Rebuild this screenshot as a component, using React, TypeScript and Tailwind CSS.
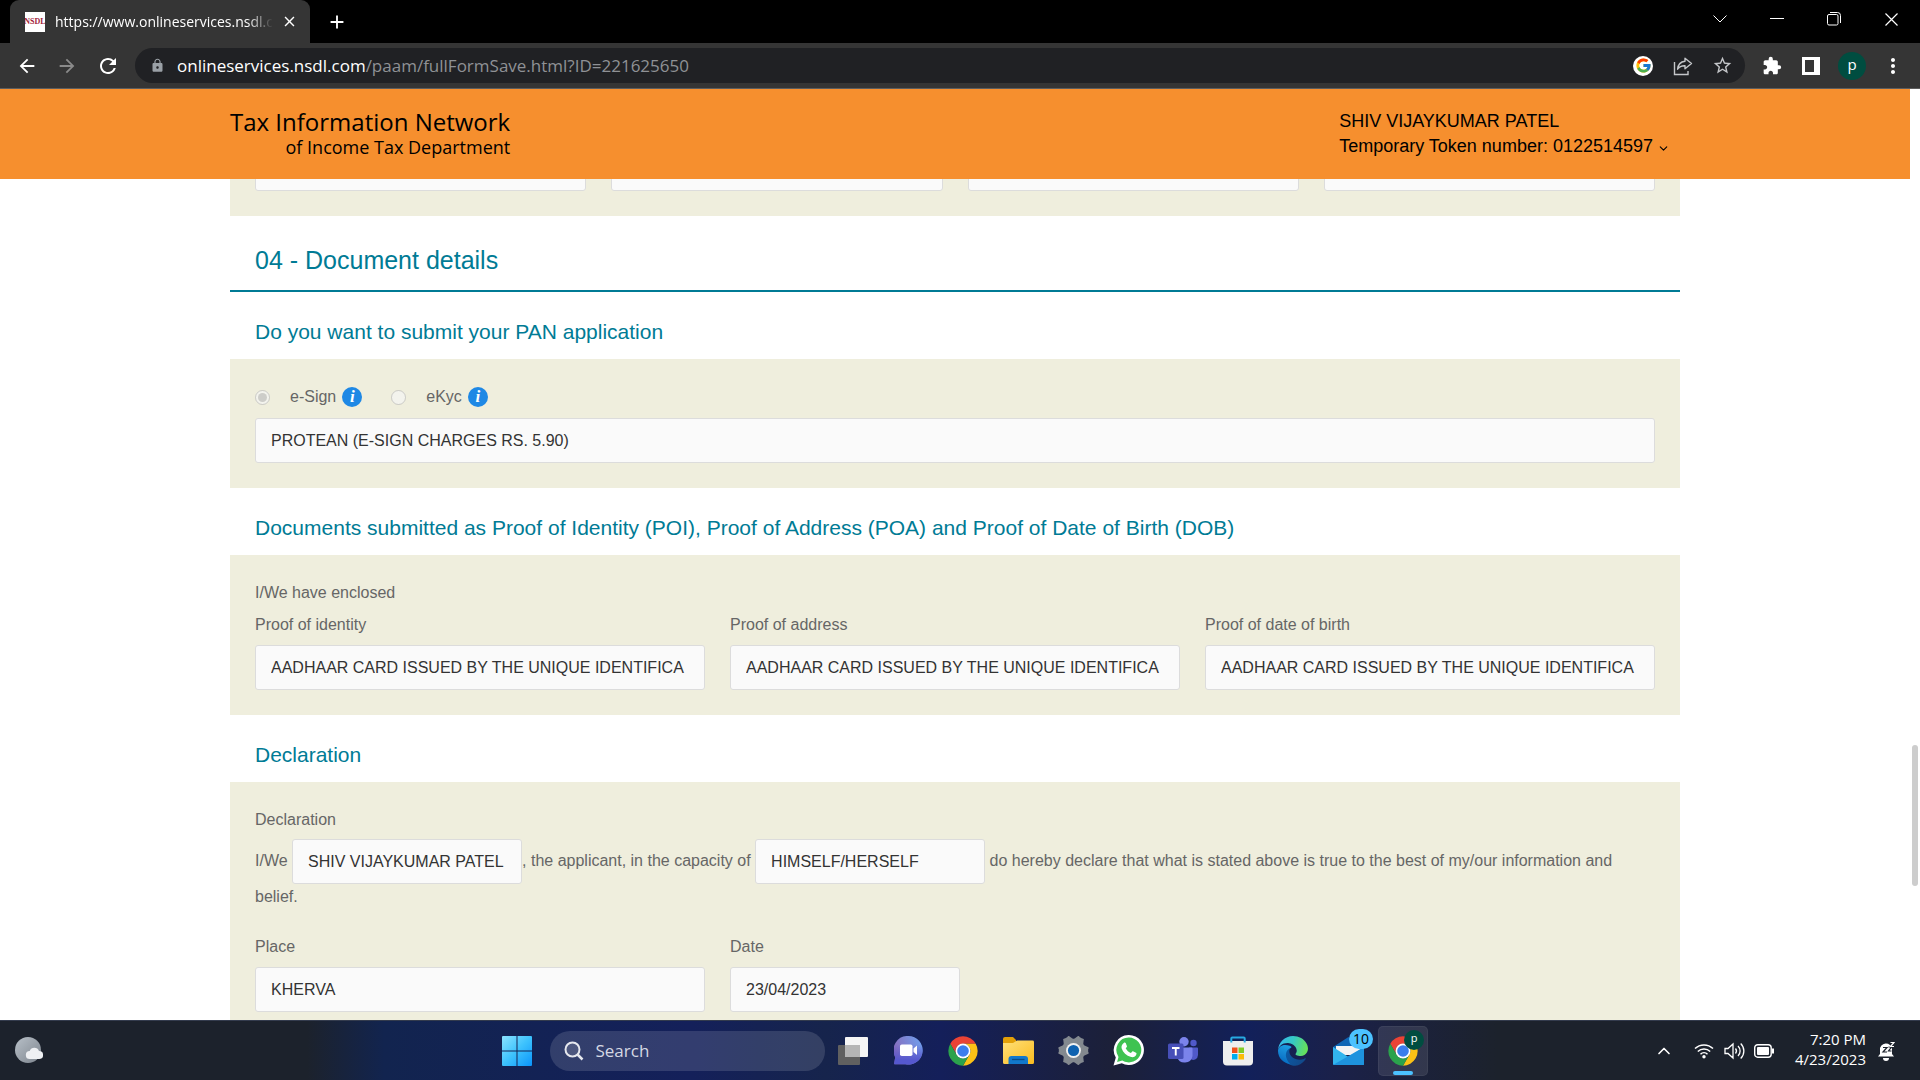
import React from "react";
import {
  MdArrowBack,
  MdArrowForward,
  MdRefresh,
  MdLock,
  MdStarBorder,
  MdExtension,
  MdClose,
  MdAdd,
  MdMoreVert,
} from "react-icons/md";
import { FcGoogle } from "react-icons/fc";
import { ChevronDown, ChevronUp } from "lucide-react";

const UI = "font-['Open_Sans','Noto_Sans',sans-serif]";
const ARIAL = "font-['Liberation_Sans',Arial,sans-serif]";

/* ---------- Browser chrome ---------- */

function TabStrip() {
  return (
    <div className="flex h-[43px] shrink-0 items-stretch justify-between bg-black pl-[10px] text-white">
      <div className="flex items-center">
        <div className="flex h-full w-[300px] items-center rounded-t-[9px] bg-[#353535] pl-[15px] pr-[12px]">
          <span className="flex h-5 w-5 items-center justify-center overflow-hidden bg-white font-['Liberation_Serif',serif] text-[8px] font-bold text-[#a3243b]">
            NSDL
          </span>
          <span className="ml-[10px] whitespace-nowrap text-[14px] [mask-image:linear-gradient(to_right,black_88%,transparent)]">
            https://www.onlineservices.nsdl.c
          </span>
          <button aria-label="Close tab" className="ml-auto">
            <MdClose size={17} />
          </button>
        </div>
        <button aria-label="New tab" className="ml-4">
          <MdAdd size={22} />
        </button>
      </div>
      <div className="flex h-[38px] items-center text-white">
        <button aria-label="Search tabs" className="flex w-[57px] justify-center">
          <svg width="14" height="8" viewBox="0 0 14 8" fill="none" stroke="currentColor">
            <path d="M.5.5 7 7 13.5.5" />
          </svg>
        </button>
        <button aria-label="Minimize" className="flex w-[57px] justify-center">
          <svg width="14" height="2" viewBox="0 0 14 2">
            <path d="M0 .5h14" stroke="currentColor" />
          </svg>
        </button>
        <button aria-label="Restore" className="flex w-[57px] justify-center">
          <svg width="14" height="14" viewBox="0 0 14 14" fill="none" stroke="currentColor">
            <rect x=".5" y="2.5" width="10.5" height="10.5" rx="1.5" />
            <path d="M3 .5h7.5a3 3 0 0 1 3 3V11" />
          </svg>
        </button>
        <button aria-label="Close window" className="flex w-[58px] justify-center">
          <svg width="13" height="13" viewBox="0 0 13 13" stroke="currentColor" strokeWidth="1.200">
            <path d="m.5.5 12 12M12.500.5l-12 12" />
          </svg>
        </button>
      </div>
    </div>
  );
}

function Toolbar() {
  return (
    <div className="flex h-[46px] shrink-0 items-center border-b border-[#5d5d5d] bg-[#353535] text-white">
      <button aria-label="Back" className="ml-4">
        <MdArrowBack size={22} />
      </button>
      <button aria-label="Forward" className="ml-[18px] text-[#8a8a8a]">
        <MdArrowForward size={22} />
      </button>
      <button aria-label="Reload" className="ml-[18px]">
        <MdRefresh size={24} />
      </button>
      <div className="ml-[15px] flex h-[35px] min-w-0 flex-1 items-center rounded-full bg-[#202124] pl-[15px] pr-3">
        <MdLock size={15} className="text-[#9aa0a6]" />
        <p className="ml-3 flex-1 whitespace-nowrap text-[17px] text-[#8f9195]">
          <span className="text-white">onlineservices.nsdl.com</span>/paam/fullFormSave.html?ID=221625650
        </p>
        <button aria-label="Google Lens" className="flex h-5 w-5 items-center justify-center rounded-full bg-white">
          <FcGoogle size={17} />
        </button>
        <button aria-label="Share" className="ml-5 text-[#c4c6c9]">
          <svg width="20" height="20" viewBox="0 0 20 20" fill="none" stroke="currentColor" strokeWidth="1.4">
            <path d="M1.500 6v12.500H15V15" />
            <path d="M12 2.200 18.500 7.500 12 12.800V9.800C8.500 9.600 6.300 10.800 4.600 13.200 5 9 7.500 5.800 12 5.300Z" strokeLinejoin="round" />
          </svg>
        </button>
        <button aria-label="Bookmark" className="ml-[19px] text-[#c4c6c9]">
          <MdStarBorder size={21} />
        </button>
      </div>
      <button aria-label="Extensions" className="ml-[17px]">
        <MdExtension size={20} />
      </button>
      <button aria-label="Side panel" className="ml-5">
        <svg width="18" height="18" viewBox="0 0 18 18">
          <rect width="18" height="18" fill="#fff" />
          <rect x="3" y="3" width="9" height="12" fill="#353535" />
        </svg>
      </button>
      <button aria-label="Profile" className="ml-[18px] flex h-7 w-7 items-center justify-center rounded-full bg-[#004d40] pb-[3px] text-[15px]">
        p
      </button>
      <button aria-label="Menu" className="ml-[15px] mr-[15px]">
        <MdMoreVert size={24} />
      </button>
    </div>
  );
}

/* ---------- Page ---------- */

function SiteHeader() {
  return (
    <header className="h-[90px] shrink-0 bg-[#f68f2e]">
      <div className="mx-auto flex h-full max-w-[1450px] items-center justify-between text-black">
        <div className={`${UI} text-right`}>
          <div className="text-[24px] font-medium leading-[26px]">Tax Information Network</div>
          <div className="text-[18px] font-medium leading-[24px]">of Income Tax Department</div>
        </div>
        <div className="mr-[10px] text-[18px] leading-[25px]">
          <div>SHIV VIJAYKUMAR PATEL</div>
          <button className="flex items-center">
            Temporary Token number: 0122514597
            <ChevronDown size={13} className="ml-1 mt-1" />
          </button>
        </div>
      </div>
    </header>
  );
}

const INPUT =
  "h-[45px] rounded-[3px] border border-[#dcdcdc] bg-[#fafafa] px-[15px] text-[16px] text-[#333]";

function Field({ id, label, value }: { id: string; label: string; value: string }) {
  return (
    <div className="flex flex-col">
      <label htmlFor={id} className="mb-2 leading-6">
        {label}
      </label>
      <input id={id} readOnly defaultValue={value} className={`${INPUT} w-full`} />
    </div>
  );
}

function SubHeading({ children }: { children: React.ReactNode }) {
  return (
    <h3 className="px-[25px] pb-[13px] pt-[26px] text-[21px] leading-7 text-[#007b95]">{children}</h3>
  );
}

function Panel({ children }: { children: React.ReactNode }) {
  return <div className="bg-[#efeedd] px-[25px] py-[25px]">{children}</div>;
}

function InfoIcon() {
  return (
    <span className="flex h-5 w-5 items-center justify-center rounded-full bg-[#1e88e5] font-['Liberation_Serif',serif] text-[17px] font-bold italic leading-5 text-white">
      i
    </span>
  );
}

function Choice({ id, label, checked }: { id: string; label: string; checked?: boolean }) {
  return (
    <div className="flex h-[26px] items-center">
      <input
        id={id}
        type="radio"
        name="submission"
        disabled
        defaultChecked={checked}
        className="h-[15px] w-[15px]"
      />
      <label htmlFor={id} className="ml-5 mr-[6px]">
        {label}
      </label>
      <InfoIcon />
    </div>
  );
}

const AADHAAR = "AADHAAR CARD ISSUED BY THE UNIQUE IDENTIFICA";

function FormPage() {
  return (
    <main className="min-h-0 flex-1 overflow-hidden bg-white">
      <div className="mx-auto max-w-[1450px] text-[16px] text-[#666]">
        <div className="-mt-[33px] grid grid-cols-4 gap-[25px] bg-[#efeedd] px-[25px] pb-[25px]">
          <input aria-label="Flat" readOnly className={`${INPUT} min-w-0`} />
          <input aria-label="Area" readOnly className={`${INPUT} min-w-0`} />
          <input aria-label="Town" readOnly className={`${INPUT} min-w-0`} />
          <input aria-label="Pincode" readOnly className={`${INPUT} min-w-0`} />
        </div>

        <h2 className="border-b-2 border-[#007b95] px-[25px] pb-[13px] pt-[27px] text-[25px] leading-[34px] text-[#007b95]">
          04 - Document details
        </h2>

        <SubHeading>Do you want to submit your PAN application</SubHeading>
        <Panel>
          <div className="mb-2 flex gap-[29px]">
            <Choice id="esign" label="e-Sign" checked />
            <Choice id="ekyc" label="eKyc" />
          </div>
          <input
            aria-label="e-Sign provider"
            readOnly
            defaultValue="PROTEAN (E-SIGN CHARGES RS. 5.90)"
            className={`${INPUT} block w-full`}
          />
        </Panel>

        <SubHeading>
          Documents submitted as Proof of Identity (POI), Proof of Address (POA) and Proof of Date of Birth (DOB)
        </SubHeading>
        <Panel>
          <p className="mb-2 pt-px leading-6">I/We have enclosed</p>
          <div className="grid grid-cols-3 gap-[25px]">
            <Field id="poi" label="Proof of identity" value={AADHAAR} />
            <Field id="poa" label="Proof of address" value={AADHAAR} />
            <Field id="dob" label="Proof of date of birth" value={AADHAAR} />
          </div>
        </Panel>

        <SubHeading>Declaration</SubHeading>
        <Panel>
          <p className="mb-[7px] pt-px leading-6">Declaration</p>
          <p className="mb-[25px] leading-[26px]">
            <span>I/We </span>
            <input
              aria-label="Applicant name"
              readOnly
              defaultValue="SHIV VIJAYKUMAR PATEL"
              className={`${INPUT} w-[230px] align-middle`}
            />
            <span>, the applicant, in the capacity of </span>
            <input
              aria-label="Capacity"
              readOnly
              defaultValue="HIMSELF/HERSELF"
              className={`${INPUT} w-[230px] align-middle`}
            />{" "}
            <span>do hereby declare that what is stated above is true to the best of my/our information and</span>{" "}
            <span className="inline-block">belief.</span>
          </p>
          <div className="grid grid-cols-3 gap-[25px]">
            <Field id="place" label="Place" value="KHERVA" />
            <div className="w-[230px]">
              <Field id="date" label="Date" value="23/04/2023" />
            </div>
          </div>
        </Panel>
      </div>
    </main>
  );
}

function ScrollTrack() {
  return (
    <div className="flex w-[10px] flex-col items-center bg-white">
      <div className="grow-[656]" />
      <div className="w-[6px] grow-[141] rounded-full bg-[#cdcdcd]" />
      <div className="grow-[134]" />
    </div>
  );
}

/* ---------- Taskbar icons ---------- */

function StartIcon() {
  return (
    <svg width="30" height="30" viewBox="0 0 30 30">
      <defs>
        <linearGradient id="start" x1="0" y1="0" x2="1" y2="1">
          <stop offset="0" stopColor="#8be3ff" />
          <stop offset=".5" stopColor="#3dc2fd" />
          <stop offset="1" stopColor="#0a94fb" />
        </linearGradient>
      </defs>
      <path fill="url(#start)" d="M0 1a1 1 0 0 1 1-1h13.500v14.500H0zM15.500 0H29a1 1 0 0 1 1 1v13.500H15.500zM0 15.500h14.500V30H1a1 1 0 0 1-1-1zM15.500 15.500H30V29a1 1 0 0 1-1 1H15.500z" />
    </svg>
  );
}

function TaskViewIcon() {
  return (
    <svg width="30" height="28" viewBox="0 0 30 28">
      <rect x="0" y="8" width="22" height="20" rx="1" fill="#606060" />
      <rect x="7" y="0" width="23" height="20" rx="1" fill="#f5f5f5" />
      <rect x="7" y="8" width="15" height="12" fill="#b5b5b5" />
    </svg>
  );
}

function ChatIcon() {
  return (
    <svg width="29" height="29" viewBox="0 0 29 29">
      <defs>
        <linearGradient id="chat" x1="1" y1=".2" x2="0" y2=".6">
          <stop offset="0" stopColor="#6fa0ee" />
          <stop offset="1" stopColor="#8a68b8" />
        </linearGradient>
        <linearGradient id="chatLow" x1="0" y1="0" x2="0" y2="1">
          <stop offset=".3" stopColor="#5558cf" stopOpacity="0" />
          <stop offset=".85" stopColor="#5558cf" />
        </linearGradient>
      </defs>
      <path fill="url(#chat)" d="M14.500 0a14.300 14.300 0 1 1-3 28.300H1.200A1 1 0 0 1 .2 27.200l1-6A14.300 14.300 0 0 1 14.500 0Z" />
      <path fill="url(#chatLow)" d="M14.500 0a14.300 14.300 0 1 1-3 28.300H1.200A1 1 0 0 1 .2 27.200l1-6A14.300 14.300 0 0 1 14.500 0Z" />
      <rect x="6" y="8.500" width="12.500" height="11.500" rx="1.800" fill="#fff" />
      <path d="M19.500 12.500 23 9.500v9.500l-3.500-3z" fill="#fff" />
    </svg>
  );
}

function ChromeIcon() {
  const sector =
    "M24 13H43.050A22 22 0 0 0 4.950 13L14.470 29.500A11 11 0 0 1 24 13Z";
  return (
    <svg width="32" height="32" viewBox="0 0 48 48">
      <path d={sector} fill="#ea4335" />
      <path d={sector} fill="#fbc116" transform="rotate(120 24 24)" />
      <path d={sector} fill="#2ba24c" transform="rotate(240 24 24)" />
      <circle cx="24" cy="24" r="11.200" fill="#fff" />
      <circle cx="24" cy="24" r="8.700" fill="#3b7ded" />
    </svg>
  );
}

function FolderIcon() {
  return (
    <svg width="31" height="27" viewBox="0 0 31 27">
      <defs>
        <linearGradient id="folder" x1="0" y1="0" x2="1" y2="1">
          <stop offset="0" stopColor="#ffe07a" />
          <stop offset="1" stopColor="#fbbc1f" />
        </linearGradient>
      </defs>
      <path d="M0 2a2 2 0 0 1 2-2h8l3 3v6H0z" fill="#e3a008" />
      <path d="M0 6h10l4-2.500h15.500a1.500 1.500 0 0 1 1.500 1.500v20.500a1.500 1.500 0 0 1-1.500 1.500H1.500A1.500 1.500 0 0 1 0 25.500z" fill="url(#folder)" />
      <path d="M5.500 27v-5a3 3 0 0 1 3-3h13.500a3 3 0 0 1 3 3v5z" fill="#1278cc" />
      <path d="M9 22.500h12.500" stroke="#0b4c87" strokeWidth="1.300" />
    </svg>
  );
}

function GearIcon() {
  const tooth = "M9.500 6 11.800.6 13 .3l1 2h2l1-2 1.200.3L20.500 6z";
  return (
    <svg width="31" height="31" viewBox="0 0 30 30">
      <g fill="#83898f">
        <circle cx="15" cy="15" r="11.300" />
        <path d={tooth} transform="rotate(30 15 15)" />
        <path d={tooth} transform="rotate(90 15 15)" />
        <path d={tooth} transform="rotate(150 15 15)" />
        <path d={tooth} transform="rotate(210 15 15)" />
        <path d={tooth} transform="rotate(270 15 15)" />
        <path d={tooth} transform="rotate(330 15 15)" />
        <path d="M12 .8h6V5h-6z" transform="rotate(30 15 15)" />
        <path d="M12 .8h6V5h-6z" transform="rotate(90 15 15)" />
        <path d="M12 .8h6V5h-6z" transform="rotate(150 15 15)" />
        <path d="M12 .8h6V5h-6z" transform="rotate(210 15 15)" />
        <path d="M12 .8h6V5h-6z" transform="rotate(270 15 15)" />
        <path d="M12 .8h6V5h-6z" transform="rotate(330 15 15)" />
      </g>
      <circle cx="15" cy="15" r="7.200" fill="#f1f1f1" />
      <circle cx="15" cy="15" r="5.400" fill="#0f62b0" />
    </svg>
  );
}

function WhatsAppIcon() {
  return (
    <svg width="31" height="31" viewBox="0 0 31 31">
      <path fill="#fff" d="M16 0a15 15 0 1 1-7.200 28.200L.5 30.500l2.300-8A15 15 0 0 1 16 0Z" />
      <path fill="#3fc351" d="M16 2.600a12.400 12.400 0 1 1-6.700 22.900l-5.200 1.400 1.400-5A12.400 12.400 0 0 1 16 2.600Z" />
      <path
        fill="#fff"
        d="M10.800 7.900c.5-.5 1.600-.5 1.900.2l1.200 2.900c.2.600-.1 1-1.200 2.300 1.200 2.300 2.900 3.800 5.200 4.800 1.300-1.700 1.600-2 2.100-1.800l3 1.400c.6.300.6.600.4 1.500-.5 2.300-3.100 3.400-5.200 2.900-5-1.300-8.200-4.500-9.600-8.900-.5-1.900.6-4.200 2.200-5.300Z"
      />
    </svg>
  );
}

function TeamsIcon() {
  return (
    <svg width="30" height="28" viewBox="0 0 30 28">
      <circle cx="25.500" cy="6" r="3.200" fill="#5059c9" />
      <path d="M21 10.500h8a1 1 0 0 1 1 1V18a4.800 4.800 0 0 1-8 3.600z" fill="#5059c9" />
      <circle cx="16" cy="4.700" r="4.700" fill="#7b83eb" />
      <path d="M9 10.500h14.500a1 1 0 0 1 1 1V19A8 8 0 0 1 9 20z" fill="#7b83eb" />
      <rect x="0" y="6.500" width="15.500" height="15.500" rx="1.500" fill="#474fb8" />
      <path d="M4 10h7.500v1.900H8.700V18.500H6.800V11.900H4z" fill="#fff" />
    </svg>
  );
}

function StoreIcon() {
  return (
    <svg width="30" height="30" viewBox="0 0 30 30">
      <path d="M0 5h30v20.500a4 4 0 0 1-4 4H4a4 4 0 0 1-4-4z" fill="#eeeeee" />
      <path d="M8.300 6.500V2.500a1 1 0 0 1 1-1h11.400a1 1 0 0 1 1 1v4" fill="none" stroke="#27a9e1" strokeWidth="2" />
      <rect x="9" y="11.500" width="5.500" height="5.500" fill="#f1511b" />
      <rect x="15.500" y="11.500" width="5.500" height="5.500" fill="#80cc28" />
      <rect x="9" y="18" width="5.500" height="5.500" fill="#00adef" />
      <rect x="15.500" y="18" width="5.500" height="5.500" fill="#fbbc09" />
    </svg>
  );
}

function EdgeIcon() {
  return (
    <svg width="30" height="30" viewBox="0 0 256 256">
      <defs>
        <linearGradient id="edgeDark" x1=".2" y1="0" x2="1" y2=".4">
          <stop offset="0" stopColor="#0c59a4" />
          <stop offset="1" stopColor="#114a8b" />
        </linearGradient>
        <linearGradient id="edgeBlue" x1=".6" y1="0" x2=".3" y2="1">
          <stop offset="0" stopColor="#1b9de2" />
          <stop offset=".5" stopColor="#1482d0" />
          <stop offset="1" stopColor="#0067c0" />
        </linearGradient>
        <linearGradient id="edgeGreen" x1="0" y1=".2" x2="1" y2=".4">
          <stop offset="0" stopColor="#35b7f0" />
          <stop offset=".5" stopColor="#36c9c3" />
          <stop offset="1" stopColor="#66e05a" />
        </linearGradient>
      </defs>
      <path fill="url(#edgeDark)" d="M231 190.500c-3.400 1.800-6.900 3.400-10.500 4.700-11.500 4.300-23.600 6.500-35.900 6.500-47.300 0-88.500-32.500-88.500-74.300.1-11.400 6.400-21.900 16.400-27.300-42.800 1.800-53.800 46.400-53.800 72.500 0 73.900 68.100 81.400 82.800 81.400 7.900 0 19.800-2.300 27-4.600l1.300-.4a128.300 128.300 0 0 0 66.600-52.800c2.100-3.500-1.900-7.500-5.400-5.700Z" />
      <path fill="url(#edgeBlue)" d="M0 128C0 90 44 62 100 84c10 4 18 10 12.500 16.100-30 8-54 40-42 84 8 28 22 46 35.200 57.300C50 234 0 190 0 128Z" />
      <path fill="url(#edgeGreen)" d="M152.300 148.900c-.9 1-3.400 2.500-3.400 5.600 0 2.600 1.700 5.200 4.800 7.300 14.300 10 41.400 8.600 41.500 8.600 10.700 0 21.100-2.900 30.300-8.300 18.800-11 30.400-31.100 30.400-52.900.3-22.400-8-37.300-11.300-43.900C223.500 23.900 177.700 0 128 0 58 0 1 56.200 0 126.200c.5-36.500 36.800-66 80-66 3.500 0 23.500.3 42 10.100 16.300 8.500 24.900 18.900 30.800 29.200 6.200 10.700 7.300 24.100 7.300 29.500 0 5.300-2.700 13.300-7.800 19.900Z" />
    </svg>
  );
}

function MailIcon() {
  return (
    <svg width="31" height="28" viewBox="0 0 31 28">
      <path d="M0 10 15.500 0 31 10v5H0z" fill="#0f66b5" />
      <path d="M3 9h25v9H3z" fill="#f3f3f3" />
      <path d="M0 10l15.500 10L31 10v17a1 1 0 0 1-1 1H1a1 1 0 0 1-1-1z" fill="#32b5ee" />
      <path d="M0 28 31 10v17a1 1 0 0 1-1 1z" fill="#1e93de" />
    </svg>
  );
}

function TaskButton({ label, active, children }: { label: string; active?: boolean; children: React.ReactNode }) {
  return (
    <div className="flex w-[55px] shrink-0 justify-center">
      <button
        aria-label={label}
        className={
          active
            ? "relative flex h-[50px] w-[50px] items-center justify-center rounded-[5px] border border-white/5 bg-white/10"
            : "relative flex h-[50px] w-[50px] items-center justify-center"
        }
      >
        {children}
      </button>
    </div>
  );
}

function Taskbar() {
  return (
    <footer
      className={`${UI} grid h-[60px] shrink-0 grid-cols-[1fr_auto_1fr] items-center border-t border-[#333b4d] bg-[linear-gradient(to_right,#1c222c_16%,#12244f_20%,#14205a_36%,#16244c_43%,#141f5a_49%,#1c2038_58%,#12205a_65%,#1b2148_70%,#1c222c_78%)] text-white`}
    >
      <div className="pl-[15px]">
        <svg width="28" height="27" viewBox="0 0 28 27" aria-label="Weather">
          <defs>
            <linearGradient id="moon" x1="0" y1="0" x2="1" y2="1">
              <stop offset="0" stopColor="#b8c0c8" />
              <stop offset="1" stopColor="#7d858e" />
            </linearGradient>
          </defs>
          <circle cx="13" cy="13" r="13" fill="url(#moon)" />
          <path d="M15 22a4 4 0 0 1-.3-8 5 5 0 0 1 9.300 0 4 4 0 0 1 .2 8z" fill="#eef0f3" />
        </svg>
      </div>
      <div className="flex items-center">
        <TaskButton label="Start">
          <StartIcon />
        </TaskButton>
        <label className="ml-[5px] mr-px flex h-10 w-[275px] items-center rounded-full bg-white/13 pl-[14px]">
          <svg width="20" height="20" viewBox="0 0 20 20" fill="none" stroke="#e6e8ee" strokeWidth="2">
            <circle cx="8.500" cy="8.500" r="7" fill="#ffffff22" />
            <path d="m13.500 13.500 5 5" strokeWidth="2.500" />
          </svg>
          <input
            aria-label="Search"
            placeholder="Search"
            className="ml-3 w-[180px] bg-transparent text-[17px] placeholder:text-[#d5d8e3]"
          />
        </label>
        <TaskButton label="Task view"><TaskViewIcon /></TaskButton>
        <TaskButton label="Chat"><ChatIcon /></TaskButton>
        <TaskButton label="Chrome"><ChromeIcon /></TaskButton>
        <TaskButton label="File Explorer"><FolderIcon /></TaskButton>
        <TaskButton label="Settings"><GearIcon /></TaskButton>
        <TaskButton label="WhatsApp"><WhatsAppIcon /></TaskButton>
        <TaskButton label="Teams"><TeamsIcon /></TaskButton>
        <TaskButton label="Microsoft Store"><StoreIcon /></TaskButton>
        <TaskButton label="Edge"><EdgeIcon /></TaskButton>
        <TaskButton label="Mail">
          <MailIcon />
          <span className="absolute right-0 top-[3px] flex h-5 w-6 items-center justify-center rounded-full bg-[#4cc2ff] text-[14px] text-black">
            10
          </span>
        </TaskButton>
        <TaskButton label="Chrome, profile p" active>
          <ChromeIcon />
          <span className="absolute right-[3px] top-[3px] flex h-5 w-5 items-center justify-center rounded-full bg-[#004d40] pb-[2px] text-[11px] text-white">
            p
          </span>
          <span className="absolute bottom-0 h-1 w-5 rounded-full bg-[#4cc2ff]" />
        </TaskButton>
      </div>
      <div className="flex items-center justify-end pr-[25px]">
        <ChevronUp size={20} />
        <svg className="ml-5" width="20" height="16" viewBox="0 0 20 16" fill="none" stroke="currentColor" strokeWidth="1.500">
          <path d="M1 5.500a13 13 0 0 1 18 0M3.800 8.500a9 9 0 0 1 12.400 0M6.500 11.200a5 5 0 0 1 7 0" />
          <circle cx="10" cy="13.700" r="1.700" fill="currentColor" stroke="none" />
        </svg>
        <svg className="ml-[10px]" width="21" height="18" viewBox="0 0 21 18" fill="none" stroke="currentColor" strokeWidth="1.300">
          <path d="M1 6.500h3L9 2v14l-5-4.500H1zM11.500 6.500a4 4 0 0 1 0 5M14 4a7 7 0 0 1 0 10M16.700 1.500a10.500 10.500 0 0 1 0 15" />
        </svg>
        <svg className="ml-[9px]" width="21" height="14" viewBox="0 0 21 14" fill="none" stroke="currentColor">
          <rect x=".7" y=".7" width="16.500" height="12.500" rx="3" strokeWidth="1.400" />
          <rect x="3" y="3" width="12" height="8" rx="1" fill="currentColor" stroke="none" />
          <path d="M19 4.500v5" strokeWidth="2" />
        </svg>
        <div className="ml-5 pb-1 text-right text-[15px] leading-5">
          <div>7:20 PM</div>
          <div>4/23/2023</div>
        </div>
        <svg className="ml-3" width="17" height="20" viewBox="0 0 17 20">
          <path d="M2 9a6 6 0 0 1 12-1v5l2 2.500H0L2 13z" fill="#fff" />
          <path d="M5 17h6a3 3 0 0 1-6 0z" fill="#fff" />
          <path d="M5 6.500h4L5 11h4M10.500 6h3l-3 4h3" fill="none" stroke="#1c222c" strokeWidth="1.200" />
          <path d="M12.500 1.500h3.500l-3.500 4H16" fill="none" stroke="#fff" strokeWidth="1.200" />
        </svg>
      </div>
    </footer>
  );
}

export default function App() {
  return (
    <div className={`${ARIAL} flex h-screen flex-col overflow-hidden bg-white`}>
      <div className={UI}>
        <TabStrip />
        <Toolbar />
      </div>
      <div className="flex min-h-0 flex-1">
        <div className="flex min-w-0 flex-1 flex-col">
          <SiteHeader />
          <FormPage />
        </div>
        <ScrollTrack />
      </div>
      <Taskbar />
    </div>
  );
}
